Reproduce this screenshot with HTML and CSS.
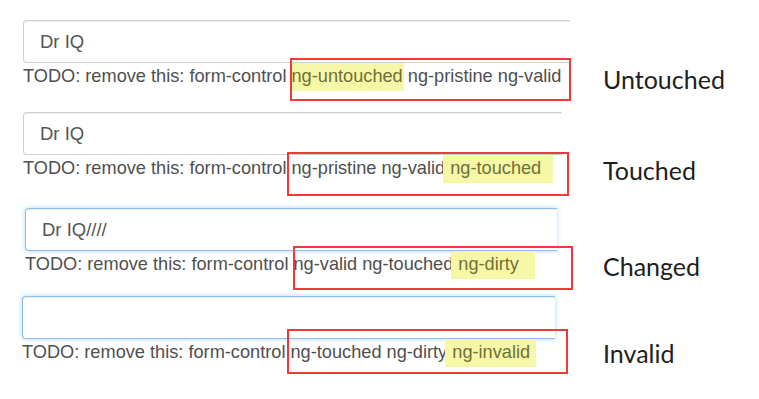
FILE: index.html
```html
<!DOCTYPE html>
<html lang="en">
<head>
<meta charset="UTF-8" />
<meta name="viewport" content="width=device-width, initial-scale=1" />
<title>Angular control state classes</title>
<link rel="stylesheet" href="styles.css">
</head>
<body>
  <div class="page">

    <div class="row row-untouched">
      <div class="shot">
        <input type="text" class="field" value="Dr IQ" />
        <div class="classes">TODO: remove this: form-control <span class="mark">ng-untouched</span> ng-pristine ng-valid</div>
        <div class="callout"></div>
      </div>
      <div class="state">Untouched</div>
    </div>

    <div class="row row-touched">
      <div class="shot">
        <input type="text" class="field" value="Dr IQ" />
        <div class="classes">TODO: remove this: form-control ng-pristine ng-valid<span class="mark"> ng-touched</span></div>
        <div class="callout"></div>
      </div>
      <div class="state">Touched</div>
    </div>

    <div class="row row-changed">
      <div class="shot">
        <input type="text" class="field field-focus" value="Dr IQ////" />
        <div class="classes">TODO: remove this: form-control ng-valid ng-touched<span class="mark"> ng-dirty</span></div>
        <div class="callout"></div>
      </div>
      <div class="state">Changed</div>
    </div>

    <div class="row row-invalid">
      <div class="shot">
        <input type="text" class="field field-focus" value="" />
        <div class="classes">TODO: remove this: form-control ng-touched ng-dirty<span class="mark"> ng-invalid</span></div>
        <div class="callout"></div>
      </div>
      <div class="state">Invalid</div>
    </div>

  </div>
</body>
</html>
```

FILE: styles.css
```css
body {
  margin: 0;
  background-color: #fff;
  font-family: 'Liberation Sans', Arial, sans-serif;
}
.page {
  padding: 20px 0 30px;
}
.row {
  display: flex;
  align-items: flex-end;
}
.shot {
  position: relative;
  width: 603px;
  box-sizing: border-box;
  padding-left: 23px;
}
.field {
  display: block;
  height: 43px;
  box-sizing: border-box;
  margin: 0;
  padding: 0 0 0 16px;
  border: 1px solid #d0d0d0;
  border-right: none;
  border-radius: 4px 0 0 4px;
  background-color: #fff;
  font-family: 'Liberation Sans', Arial, sans-serif;
  font-size: 18.5px;
  color: #555;
  box-shadow: inset 0 1px 1px rgba(0, 0, 0, 0.075);
  outline: none;
}
.field-focus {
  border-color: #8cc0ec;
  box-shadow: inset 0 1px 1px rgba(0, 0, 0, 0.075), 0 0 5px rgba(102, 175, 233, 0.5);
}
.classes {
  font-size: 18.2px;
  line-height: 27px;
  color: #4f4f4f;
  white-space: nowrap;
}
.mark {
  background-color: #f6f8a8;
  color: #707038;
  padding: 3px 4px 5px 2px;
  margin-left: -2px;
}
.callout {
  position: absolute;
  border: 2px solid #f03a3a;
  box-sizing: border-box;
}
.state {
  font-family: Lato, 'Open Sans', sans-serif;
  font-size: 25px;
  color: #1e1e1e;
  line-height: 27px;
  margin-bottom: -2px;
}

/* per-strip offsets, the four pictures were not cut the same */
.row-untouched .field { width: 547px; }
.row-untouched .mark { padding-right: 1px; margin-right: -1px; }
.row-untouched .state { margin-bottom: -3px; }
.row-untouched .callout { left: 290px; top: 38px; width: 281px; height: 43px; }

.row-touched { margin-top: 22px; }
.row-touched .field { width: 539px; }
.row-touched .mark { padding-right: 12px; }
.row-touched .callout { left: 287px; top: 40px; width: 282px; height: 44px; }

.row-changed { margin-top: 26px; }
.row-changed .shot { padding-left: 25px; }
.row-changed .field { width: 532px; }
.row-changed .mark { padding-right: 16px; }
.row-changed .callout { left: 293px; top: 38px; width: 280px; height: 44px; }

.row-invalid { margin-top: 18px; }
.row-invalid .shot { padding-left: 22px; }
.row-invalid .field { width: 533px; }
.row-invalid .mark { padding-right: 6px; }
.row-invalid .state { margin-bottom: -1px; }
.row-invalid .callout { left: 287px; top: 33px; width: 281px; height: 45px; }
```
